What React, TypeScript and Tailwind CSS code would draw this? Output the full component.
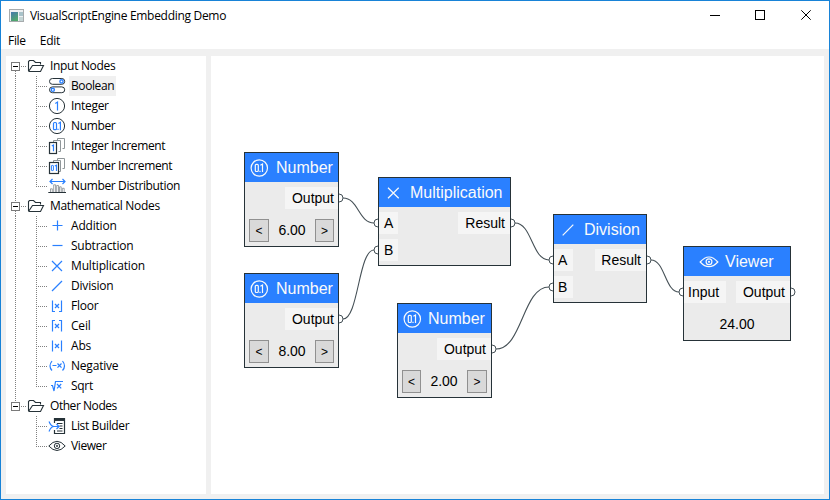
import React from "react";

const BLUE = "#2a80ff";
const DARK = "#263238";

type IconName =
  | "boolean" | "integer" | "number" | "intInc" | "numInc" | "dist"
  | "add" | "sub" | "mul" | "div" | "floor" | "ceil" | "abs" | "neg" | "sqrt"
  | "list" | "viewer";

function Glyph({ name }: { name: IconName }) {
  const b = { stroke: BLUE, fill: "none", strokeWidth: 1.2 };
  const d = { stroke: DARK, fill: "none", strokeWidth: 1 };
  switch (name) {
    case "boolean":
      return (
        <g>
          <rect x="0.5" y="0.5" width="15.2" height="5.8" rx="2.9" {...d} />
          <rect x="0.5" y="8.9" width="15.2" height="5.8" rx="2.9" {...d} />
          <circle cx="12.5" cy="3.4" r="1.6" {...b} strokeWidth={1.4} />
          <circle cx="3.8" cy="11.8" r="1.6" {...b} strokeWidth={1.4} />
        </g>
      );
    case "integer":
      return (
        <g>
          <circle cx="8" cy="8" r="7.6" {...d} />
          <path d="M6.3 5.4L8.5 4V12.4" {...b} />
        </g>
      );
    case "number":
      return (
        <g>
          <circle cx="8" cy="8" r="7.6" {...d} />
          <rect x="4.5" y="4.5" width="3" height="7.2" rx="1" {...b} />
          <path d="M9 12V10.8M9.4 5.5L11.4 4.3V12.2" {...b} />
        </g>
      );
    case "intInc":
    case "numInc":
      return (
        <g>
          <path d="M8.5 2V0.5H15.5V10.5H13.5M4.5 4V2.5H11.5V13.5H9.5" {...d} stroke="#8f9699" />
          <rect x="0.5" y="4.5" width={name === "intInc" ? 7 : 9} height="11" {...d} strokeWidth={1.2} fill="#fff" />
          {name === "intInc" ? (
            <path d="M2.8 8L4.5 7V13.2" {...b} />
          ) : (
            <g><rect x="2.4" y="7.4" width="2" height="5.2" rx="0.6" {...b} strokeWidth={1} /><path d="M5.8 8L7.5 7.2V13" {...b} /></g>
          )}
        </g>
      );
    case "dist":
      return (
        <g>
          <path d="M1 3.5H16M3.5 1L1 3.5L3.5 6M13.5 1L16 3.5L13.5 6" {...b} />
          <path d="M-0.7 14.5H17" {...d} />
          <path d="M1.5 14V10.8H3.3V14M4.7 14V6.8H6.6V14M7.7 14V7.5H9.5V14M10.5 14V8.8H12.2V14M13.3 14V10.3H15.2V14" {...d} stroke="#858c90" strokeWidth={0.8} />
        </g>
      );
    case "add":
      return <path d="M3.5 7.5H13.5M8.5 2.5V12.5" {...b} />;
    case "sub":
      return <path d="M3.5 7.5H13.5" {...b} />;
    case "mul":
      return <path d="M3 3L13 13M13 3L3 13" {...b} />;
    case "div":
      return <path d="M3 13L13 3" {...b} />;
    case "floor":
    case "ceil":
    case "abs":
      return (
        <g>
          <path
            d={
              name === "floor" ? "M3.5 2.5V13.5H6M12.5 2.5V13.5H10"
                : name === "ceil" ? "M6 2.5H3.5V13.5M10 2.5H12.5V13.5"
                : "M3.5 2.5V13.5M12.5 2.5V13.5"
            }
            {...b}
          />
          <path d="M6 6L10 10M10 6L6 10" {...b} />
        </g>
      );
    case "neg":
      return (
        <g>
          <path d="M3 3Q-1 8 3 12.5M13.5 3Q17.5 8 13.5 12.5M3.5 7.5H7.5" {...b} />
          <path d="M8.5 5.5L12.5 9.7M12.5 5.5L8.5 9.7" {...b} />
        </g>
      );
    case "sqrt":
      return (
        <g>
          <path d="M2 7.5H3.5L5 13L6.5 3.5H14" {...b} />
          <path d="M8 6L12.2 10.3M12.2 6L8 10.3" {...b} />
        </g>
      );
    case "list":
      return (
        <g>
          <path d="M5.5 5V0.5H15.5V15.5H5.5V12" {...d} strokeWidth={1.2} />
          <path d="M5.5 1.7H15.5" {...d} strokeWidth={2.5} />
          <path d="M8 5.5H13.5M10.5 8H13.5M10.5 10.5H13.5M8 13H13.5" {...d} />
          <path d="M0 3.5Q2 8.5 5 8.5H10M0 13.5Q2 8.5 5 8.5M7.5 6L10 8.5L7.5 11" {...b} />
        </g>
      );
    case "viewer":
      return (
        <g>
          <path d="M-0.2 8Q8 -1.4 16.2 8Q8 17 -0.2 8Z" {...d} />
          <circle cx="8" cy="7.9" r="2.7" {...d} />
          <circle cx="8" cy="7.9" r="0.7" {...d} />
        </g>
      );
  }
}

type Leaf = { label: string; icon: IconName; track: string; selected?: boolean };
type Group = { label: string; track: string; items: Leaf[] };

const groups: Group[] = [
  {
    label: "Input Nodes", track: "tracking-[-0.32px]",
    items: [
      { label: "Boolean", icon: "boolean", track: "tracking-[-0.4px]", selected: true },
      { label: "Integer", icon: "integer", track: "tracking-[-0.32px]" },
      { label: "Number", icon: "number", track: "tracking-[-0.36px]" },
      { label: "Integer Increment", icon: "intInc", track: "tracking-[-0.38px]" },
      { label: "Number Increment", icon: "numInc", track: "tracking-[-0.38px]" },
      { label: "Number Distribution", icon: "dist", track: "tracking-[-0.36px]" },
    ],
  },
  {
    label: "Mathematical Nodes", track: "tracking-[-0.32px]",
    items: [
      { label: "Addition", icon: "add", track: "tracking-[-0.2px]" },
      { label: "Subtraction", icon: "sub", track: "tracking-[-0.22px]" },
      { label: "Multiplication", icon: "mul", track: "tracking-[-0.16px]" },
      { label: "Division", icon: "div", track: "tracking-[-0.2px]" },
      { label: "Floor", icon: "floor", track: "tracking-[-0.2px]" },
      { label: "Ceil", icon: "ceil", track: "tracking-[-0.2px]" },
      { label: "Abs", icon: "abs", track: "tracking-[-0.2px]" },
      { label: "Negative", icon: "neg", track: "tracking-[-0.2px]" },
      { label: "Sqrt", icon: "sqrt", track: "tracking-[-0.3px]" },
    ],
  },
  {
    label: "Other Nodes", track: "tracking-[-0.45px]",
    items: [
      { label: "List Builder", icon: "list", track: "tracking-[-0.36px]" },
      { label: "Viewer", icon: "viewer", track: "tracking-[-0.4px]" },
    ],
  },
];

const dots = { stroke: "#808080", strokeDasharray: "1 1", shapeRendering: "crispEdges" as const };

function GroupRow({ group, first, last }: { group: Group; first: boolean; last: boolean }) {
  return (
    <div className="flex h-5 items-center">
      <svg width="42" height="20" className="shrink-0" fill="none">
        {!first && <path d="M9.5 0V6" {...dots} />}
        {!last && <path d="M9.5 15V20" {...dots} />}
        <path d="M15 10.5H21" {...dots} />
        <rect x="5.5" y="6.5" width="8" height="8" stroke="#7a7a7a" />
        <path d="M7 10.5H12" stroke="#000" />
        <path d="M22.5 15V5.5L23.5 4.5H27.5L29.5 6.5H34.5V8.5M22.5 15.5H34.5L37.5 9.5H26.5L22.5 15.5" stroke={DARK} strokeWidth="1.1" />
      </svg>
      <span className={"ml-[2px] leading-5 " + group.track}>{group.label}</span>
    </div>
  );
}

function LeafRow({ leaf, end, trunk }: { leaf: Leaf; end: boolean; trunk: boolean }) {
  return (
    <div className="flex h-5 items-center">
      <svg width="62" height="20" className="shrink-0" fill="none">
        {trunk && <path d="M9.5 0V20" {...dots} />}
        <path d={end ? "M30.5 0V10" : "M30.5 0V20"} {...dots} />
        <path d="M30 10.5H41" {...dots} />
        <g transform="translate(43 2)"><Glyph name={leaf.icon} /></g>
      </svg>
      <span className={"ml-px h-5 pl-[2px] leading-5 " + leaf.track + (leaf.selected ? " w-[47px] bg-[#f0f0f0]" : "")}>
        {leaf.label}
      </span>
    </div>
  );
}

function HeaderIcon({ name }: { name: "number" | "mul" | "div" | "viewer" }) {
  return (
    <svg width="18" height="18" className="shrink-0 overflow-visible" fill="none" stroke="#fafafa" strokeWidth="1.2">
      {name === "number" && (
        <g>
          <circle cx="9.3" cy="9" r="8.2" />
          <rect x="5.3" y="5.3" width="3" height="7.2" rx="1" />
          <path d="M10 12.9V11.8M10.4 6.3L12.5 5.1V13.1" />
        </g>
      )}
      {name === "mul" && <path d="M4 3.7L14.7 14.3M14.7 3.7L4 14.3" />}
      {name === "div" && <path d="M3.7 14.3L14.3 3.7" />}
      {name === "viewer" && (
        <g>
          <path d="M0.2 9Q9 -1 17.8 9Q9 18.4 0.2 9Z" />
          <circle cx="9" cy="8.8" r="2.9" />
          <circle cx="9" cy="8.8" r="0.5" />
        </g>
      )}
    </svg>
  );
}

function Node({ place, icon, title, head, children }: {
  place: string; icon: "number" | "mul" | "div" | "viewer"; title: string; head: string; children: React.ReactNode;
}) {
  return (
    <div className={"absolute flex flex-col border border-[#263238] bg-[#ebebeb] text-[14px] " + place}>
      <div className={"flex h-[29px] shrink-0 items-center bg-[#2a80ff] text-[16px] leading-[29px] text-[#fafafa] " + head}>
        <HeaderIcon name={icon} />
        <span>{title}</span>
      </div>
      {children}
    </div>
  );
}

function Slot({ label, className }: { label: string; className: string }) {
  return <div className={"h-[22px] bg-[#f5f5f5] leading-[22px] " + className}>{label}</div>;
}

function NumberNode({ place, value, slot, head, left, right }: {
  place: string; value: string; slot: string; head: string; left: string; right: string;
}) {
  const button = "h-[23px] border border-[#909090] bg-[#d9d9d9] text-center text-[12px] leading-[22px] ";
  return (
    <Node place={place} icon="number" title="Number" head={"pl-[5px] " + head}>
      <div className="mt-[5px] flex justify-end"><Slot label="Output" className={"text-right " + slot} /></div>
      <div className="mt-[10px] flex items-center justify-between px-[4px]">
        <div className={button + left}>&lt;</div>
        <span>{value}</span>
        <div className={button + right}>&gt;</div>
      </div>
    </Node>
  );
}

const wires = [
  [343, 198, 374, 223], [343, 319, 374, 250], [515, 223, 549, 260],
  [496, 349, 549, 287], [651, 260, 679, 292],
];
const pins = [
  [339, 198], [339, 319], [492, 349], [378, 223], [378, 250], [511, 223],
  [553, 260], [553, 287], [647, 260], [683, 292], [791, 292],
];

export default function App() {
  return (
    <div className="flex h-[500px] w-[830px] flex-col overflow-hidden border border-[#1883d7] bg-white font-['Open_Sans','Noto_Sans',sans-serif] text-[12px] text-black">
      <div className="flex h-[30px] shrink-0 items-center">
        <svg width="16" height="14" className="ml-2 shrink-0">
          <defs>
            <linearGradient id="pane" x2="0.5" y2="1"><stop stopColor="#4478ad" /><stop offset="1" stopColor="#50a76c" /></linearGradient>
          </defs>
          <rect x="0.5" y="0.5" width="14" height="12" fill="#eef0f2" stroke="#a7abad" />
          <rect x="2" y="3" width="7" height="9" fill="url(#pane)" />
          <rect x="10" y="3" width="4" height="4" fill="#a9c3ca" />
          <rect x="10" y="8" width="4" height="4" fill="#c4d5d5" />
        </svg>
        <span className="ml-[5px] tracking-[-0.3px]">VisualScriptEngine Embedding Demo</span>
        <svg width="104" height="12" className="ml-auto mr-[16px] shrink-0" fill="none" stroke="#000">
          <path d="M1 5.5H11M46.5 0.5H55.5V9.5H46.5Z" shapeRendering="crispEdges" />
          <path d="M92.3 0.3L101.7 9.7M101.7 0.3L92.3 9.7" />
        </svg>
      </div>
      <div className="flex h-[18px] shrink-0 items-center gap-[14px] pl-[7px] pt-[2px] tracking-[-0.3px]">
        <span>File</span><span>Edit</span>
      </div>
      <div className="flex min-h-0 flex-1 gap-[5px] bg-[#f0f0f0] pb-[5px] pl-[5px] pr-[5px] pt-[7px]">
        <div className="w-[200px] shrink-0 bg-white">
          {groups.map((g, gi) => (
            <div key={g.label}>
              <GroupRow group={g} first={gi === 0} last={gi === groups.length - 1} />
              {g.items.map((leaf, i) => (
                <LeafRow key={leaf.label} leaf={leaf} end={i === g.items.length - 1} trunk={gi < groups.length - 1} />
              ))}
            </div>
          ))}
        </div>
        <div className="relative flex-1 overflow-hidden bg-white font-['Liberation_Sans',Arial,sans-serif]">
          <svg className="absolute inset-0" width="613" height="438" viewBox="211 56 613 438" fill="none" stroke="#455056">
            {wires.map(([x1, y1, x2, y2], i) => (
              <path key={i} d={`M${x1} ${y1}C${(x1 + x2) / 2} ${y1} ${(x1 + x2) / 2} ${y2} ${x2} ${y2}`} strokeWidth="1.1" />
            ))}
            {pins.map(([x, y], i) => <circle key={i} cx={x} cy={y} r="4" fill="#fff" />)}
          </svg>
          <NumberNode place="left-[33px] top-[96px] h-[95px] w-[95px]" value="6.00" slot="w-[53px] pr-1" head="gap-[8px]" left="w-[20px]" right="w-[19px]" />
          <NumberNode place="left-[33px] top-[217px] h-[95px] w-[95px]" value="8.00" slot="w-[53px] pr-1" head="gap-[8px]" left="w-[20px]" right="w-[19px]" />
          <NumberNode place="left-[186px] top-[247px] h-[95px] w-[95px]" value="2.00" slot="w-[54px] pr-[5px]" head="gap-[7px]" left="w-[19px]" right="w-[20px]" />
          <Node place="left-[167px] top-[121px] h-[89px] w-[133px]" icon="mul" title="Multiplication" head="gap-[8px] pl-[5px]">
            <div className="mt-[5px] flex justify-between">
              <Slot label="A" className="w-[19px] pl-[5px]" />
              <Slot label="Result" className="w-[52px] pr-[5px] text-right" />
            </div>
            <Slot label="B" className="mt-[5px] w-[19px] pl-[5px]" />
          </Node>
          <Node place="left-[342px] top-[158px] h-[89px] w-[94px]" icon="div" title="Division" head="gap-[7px] pl-[5px]">
            <div className="mt-[5px] flex justify-between">
              <Slot label="A" className="w-[19px] pl-[4px]" />
              <Slot label="Result" className="w-[51px] pr-[5px] text-right" />
            </div>
            <Slot label="B" className="mt-[5px] w-[19px] pl-[4px]" />
          </Node>
          <Node place="left-[472px] top-[190px] h-[95px] w-[108px]" icon="viewer" title="Viewer" head="gap-[7px] pl-[16px]">
            <div className="mt-[5px] flex justify-between">
              <Slot label="Input" className="w-[42px] pl-[4px]" />
              <Slot label="Output" className="w-[54px] pr-[5px] text-right" />
            </div>
            <div className="mt-[10px] text-center leading-[23px]">24.00</div>
          </Node>
        </div>
      </div>
    </div>
  );
}
